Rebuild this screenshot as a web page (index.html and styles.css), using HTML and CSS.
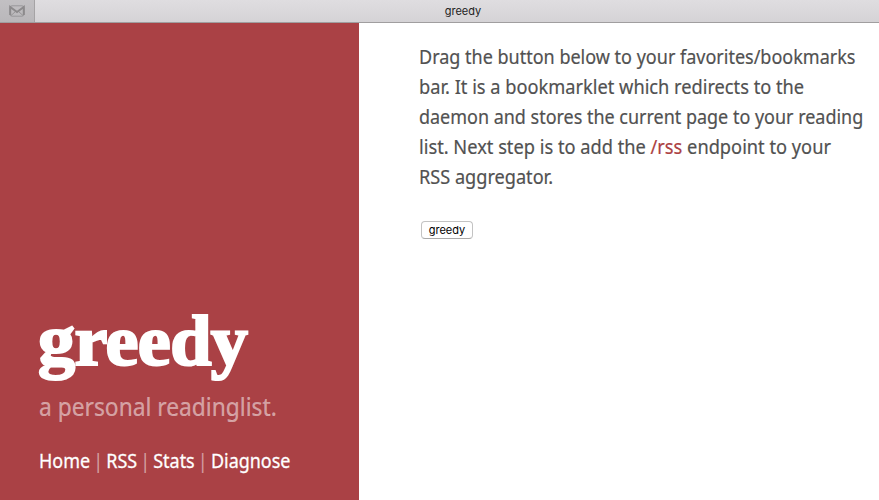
FILE: index.html
```html
<!DOCTYPE html>
<html lang="en">
<head>
<meta charset="utf-8">
<title>greedy</title>
<link rel="stylesheet" href="styles.css">
</head>
<body>
<header class="tabs">
  <div class="pin"><svg width="16" height="12" viewBox="0 0 16 12" fill="none" stroke="#8c8a8c"><rect x="1" y=".8" width="14" height="10.4" rx="2" stroke-width="1" stroke="#99979a"/><path d="M1.2 10V2L8 7l6.800-5v8" stroke-width="2"/><path d="M2 10.500l4.500-4M14 10.500l-4.500-4" stroke-width=".8"/></svg></div>
  <div class="tab">greedy</div>
</header>
<div class="page">
  <aside class="side">
    <h1>greedy</h1>
    <p class="lead">a personal readinglist.</p>
    <nav><a>Home</a> | <a>RSS</a> | <a>Stats</a> | <a>Diagnose</a></nav>
  </aside>
  <main>
    <p class="l1">Drag the button below to your favorites/bookmarks</p>
    <p class="l2">bar. It is a bookmarklet which redirects to the</p>
    <p class="l3">daemon and stores the current page to your reading</p>
    <p class="l4">list. Next step is to add the <a>/rss</a> endpoint to your</p>
    <p class="l5">RSS aggregator.</p>
    <button>greedy</button>
  </main>
</div>
</body>
</html>
```
FILE: styles.css
```css
* { box-sizing: border-box; }
body { margin: 0; height: 500px; overflow: hidden; background: #fff; font-family: "Noto Sans", sans-serif; color: #515151; }
h1, p { margin: 0; }
.tabs { display: flex; height: 23px; border-bottom: 1px solid #a09e9f; background: linear-gradient(#dfdde0, #d5d3d6); }
.pin { display: flex; width: 35px; padding: 5px 0 0 9px; border-right: 1px solid #a5a3a5; background: linear-gradient(#c2c0c3, #b9b7ba); }
.tab { flex: 1; padding-left: 12px; text-align: center; font: 11px/23px Inter, sans-serif; color: #222; }
.page { display: flex; height: 477px; }
.side { flex: none; width: 359px; padding: 282px 0 0 38px; background: #aa4145; color: rgba(255,255,255,.5); white-space: nowrap; }
h1 { height: 81px; font: bold 71px/72px "Liberation Serif", serif; color: #fff; letter-spacing: -.6px; -webkit-text-stroke: 2.2px #fff; transform: scaleX(1.046); transform-origin: 0 0; }
.lead { height: 40px; margin-left: 1px; font-size: 25px; line-height: 40px; transform: scaleX(.911); transform-origin: 0 0; -webkit-text-stroke: .2px; }
nav { margin: 20px 0 0 1px; font-size: 20px; line-height: 30px; word-spacing: -1.7px; transform: scaleX(.897); transform-origin: 0 0; }
nav a { color: #fff; -webkit-text-stroke: .3px; }
main { padding: 19px 0 0 60px; }
main p { width: max-content; font-size: 20px; line-height: 30px; transform: scaleX(.9); transform-origin: 0 0; white-space: nowrap; -webkit-text-stroke: .2px; }
main .l2 { transform: scaleX(.911); }
main .l3 { transform: scaleX(.898); }
main .l4 { transform: scaleX(.912); }
main .l5 { transform: scaleX(.907); }
main a { color: #ac4142; }
button { display: block; width: 52px; height: 18px; margin: 29px 0 0 2px; padding: 0; border: 1px solid #c3c3c3; border-bottom-color: #aaa; border-radius: 4px; background: #fff; color: #000; font: 11px/15px Inter, sans-serif; }
```
